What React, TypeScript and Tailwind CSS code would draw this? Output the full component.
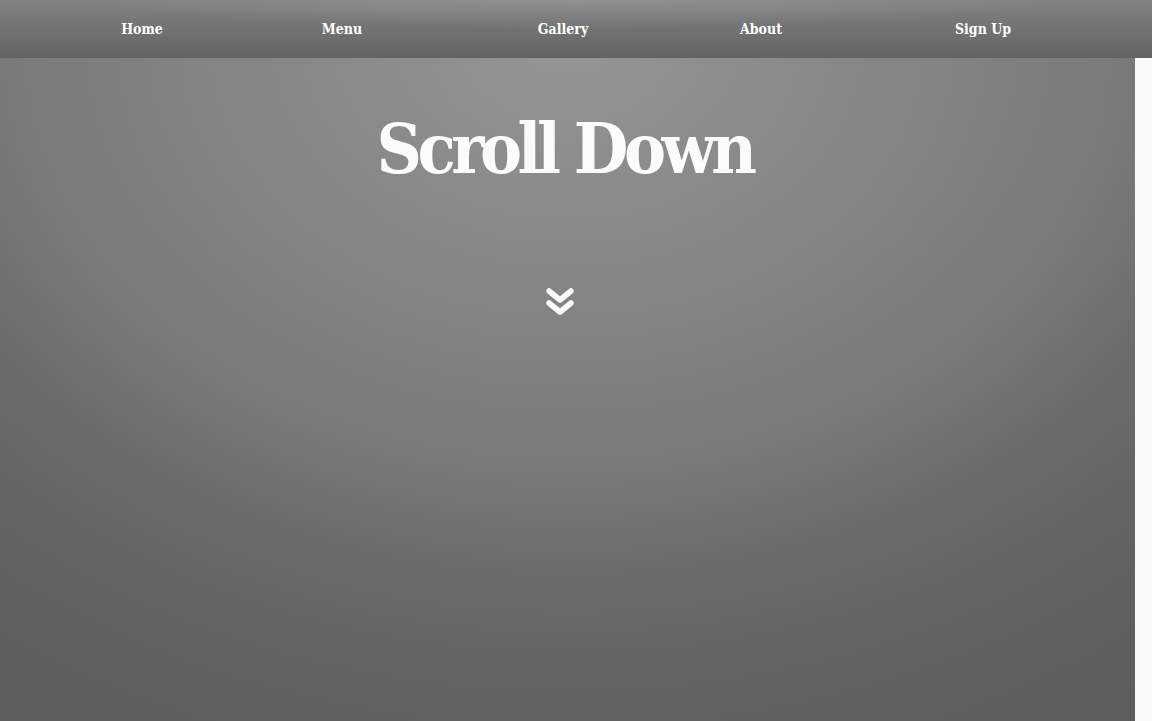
import React from 'react';

const links = [
    { label: 'Home', width: 'w-[200px]' },
    { label: 'Menu', width: 'w-[200px]' },
    { label: 'Gallery', width: 'w-[242px]' },
    { label: 'About', width: 'w-[154px]' },
    { label: 'Sign Up', width: 'w-[290px]' },
];

function ChevronsDown() {
    return (
        <svg width="28" height="32" viewBox="0 0 28 32" className="mr-[15px]">
            <polyline points="3,4 14,13 25,4" fill="none" stroke="#fbfbfb" strokeWidth="5.5" strokeLinejoin="round" strokeLinecap="round" />
            <polyline points="3,16 14,25 25,16" fill="none" stroke="#fbfbfb" strokeWidth="5.5" strokeLinejoin="round" strokeLinecap="round" />
        </svg>
    );
}

export default function App() {
    return (
        <div className="relative flex h-[721px] w-full overflow-hidden bg-[#fafafa] font-['DejaVu_Serif_Condensed','DejaVu_Serif',serif]">
            {/* Hero */}
            <main className="flex h-full w-[1135px] flex-col items-center bg-[radial-gradient(ellipse_1300px_1000px_at_50%_40px,#959595_0%,#7a7a7a_43%,#6c6c6c_53%,#626262_66%,#5e5e5e_79%,#5c5c5c_100%)]">
                <h1 className="mr-[6px] pt-[114px] text-[70px] font-bold leading-none tracking-[-4.5px] text-[#fbfbfb]">Scroll Down</h1>
                <div className="mt-[103px]">
                    <ChevronsDown />
                </div>
            </main>
            <div className="flex-1 bg-[#fafafa]" />

            {/* Top nav */}
            <nav className="absolute inset-x-0 top-0 h-[58px] bg-[radial-gradient(ellipse_500px_28px_at_50%_0,rgba(255,255,255,0.12),transparent),linear-gradient(to_bottom,#828282,#636363)]">
                <ul className="flex h-full items-center pl-[42px]">
                    {links.map(link => (
                        <li key={link.label} className={link.width + ' text-center text-[14px] font-bold text-white'}>
                            {link.label}
                        </li>
                    ))}
                </ul>
            </nav>
        </div>
    );
}
